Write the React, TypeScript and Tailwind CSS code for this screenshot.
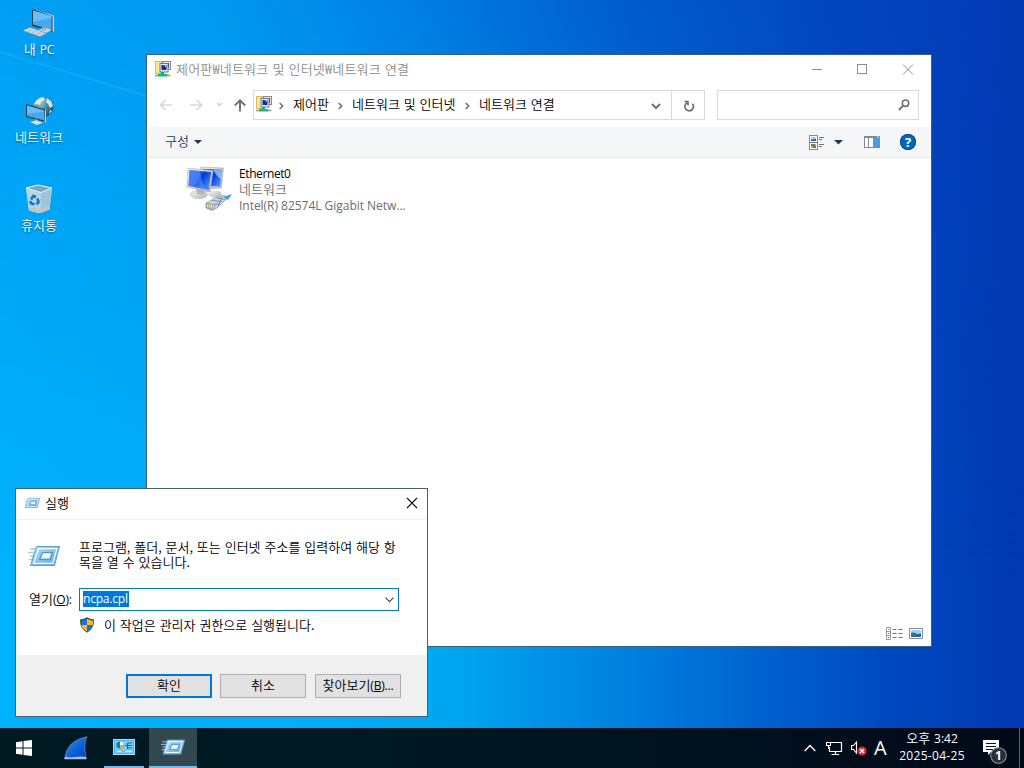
import type { ReactNode } from "react";

function Ko({ children, className = "" }: { children: ReactNode; className?: string }) {
  return (
    <span className={`block whitespace-pre text-[13px] leading-4 [word-spacing:1px] font-[350] font-['Noto_Sans_CJK_KR',sans-serif] ${className}`}>
      {children}
    </span>
  );
}

function En({ children, className = "" }: { children: ReactNode; className?: string }) {
  return <span className={`whitespace-pre text-[12px] font-normal leading-4 font-['Open_Sans','Noto_Sans',sans-serif] ${className}`}>{children}</span>;
}

function PcIcon() {
  return (
    <svg width="32" height="30" viewBox="0 0 32 30">
      <path d="M9 1 L30 7 V24 L9 18Z" fill="#30444f" />
      <path d="M9 1 L30 7 L31 8 V24 L29.500 23.500 V8Z" fill="#c2ccd2" />
      <path d="M10 2.500 L28.500 8 V21.800 L10 16.500Z" fill="#46a8ef" />
      <path d="M10 2.500 L28.500 8 V10 L10 14Z" fill="#7bc6fa" opacity=".7" />
      <path d="M15 21.500 L22 19.500 L29 22 L23 25Z" fill="#cdd3d7" />
      <path d="M19 19 L23 20 V23 L19 22Z" fill="#a5afb5" />
      <path d="M0 22.500 L7 19.500 L23 25.500 L17 28.500Z" fill="#e3e6e8" />
      <path d="M0 22.500 L17 28.500 L23 25.500" fill="none" stroke="#8f999f" strokeWidth=".8" />
      <path d="M3 21.300 L19 27.300 M5 20.500 L21 26.400 M4 24 L10.500 20.800 M8 25.500 L14.500 22.400 M12 27 L18.500 23.900" stroke="#a4acb1" strokeWidth=".6" />
    </svg>
  );
}

function NetIcon() {
  return (
    <svg width="30" height="30" viewBox="0 0 30 30" className="translate-x-[2px]">
      <defs>
        <radialGradient id="globe" cx=".35" cy=".3" r=".8">
          <stop offset="0" stopColor="#9fc6d6" />
          <stop offset=".5" stopColor="#3d8199" />
          <stop offset="1" stopColor="#164a63" />
        </radialGradient>
      </defs>
      <circle cx="17.500" cy="11" r="10" fill="url(#globe)" />
      <path d="M8.500 7 Q12 1 18 1.200 L19 4 L15 6 L14 9 L11 8 L8 9Z M21 2 L25 5 L27 10 L24 12 L22 8 L20 6Z M24 14 L26 15 L23 18Z" fill="#e4f4f2" opacity=".88" />
      <path d="M0 8 L19 13.500 V26 L0 21Z" fill="#30444f" />
      <path d="M19 13.500 L20 13.500 V26.500 L18.500 26Z" fill="#c2ccd2" />
      <path d="M1 9.500 L18 14.500 V24.300 L1 20Z" fill="#46a8ef" />
      <path d="M1 9.500 L18 14.500 V15.500 L1 18Z" fill="#7bc6fa" opacity=".7" />
      <path d="M9 23 L12 24 V27 L9 26Z" fill="#a5afb5" />
      <path d="M4 26 L10 24.500 L17 26.500 L11 29Z" fill="#dde1e4" />
    </svg>
  );
}

function BinIcon() {
  return (
    <svg width="28" height="30" viewBox="0 0 28 30">
      <path d="M1 4 L13 1 L27 4 L24.500 25.500 L13 29 L4 26.500Z" fill="#c5e0ef" />
      <path d="M1 4 L16 8.500 L15.500 29 L4 26.500Z" fill="#b4d4e8" />
      <path d="M16 8.500 L27 4 L24.500 25.500 L15.500 29Z" fill="#9cc4dc" />
      <path d="M1 4 L13 1 L27 4 L16 8.500Z" fill="#74a9c4" stroke="#e9f3f8" strokeWidth="1" />
      <path d="M3.500 22.500 L15.500 25.500 L25 21.500 L24.500 25.500 L15.500 29 L4 26.500Z" fill="#c9c3bd" />
      <g fill="none" stroke="#1675c6" strokeWidth="2.600">
        <path d="M6 15.500 L8.300 12 L11 13" />
        <path d="M12.300 14.500 L13.600 18 L11.500 20.300" />
        <path d="M9.500 20.500 L6 19.300 L5.200 17" />
      </g>
    </svg>
  );
}

function ConnIcon() {
  return (
    <svg width="16" height="16" viewBox="0 0 16 16">
      <rect x=".5" y=".5" width="6" height="12" fill="#fbe88f" stroke="#d2bd66" />
      <rect x="7.500" y=".5" width="8" height="8" fill="#e4e4dc" stroke="#8c8c8c" />
      <rect x="10" y="2" width="4" height="5" fill="#2337bd" />
      <rect x="5" y="2.500" width="8" height="8.500" fill="#eeeee6" stroke="#777" />
      <rect x="6.500" y="4" width="5" height="5" fill="#1426b4" />
      <path d="M8.500 4 h2.500 v2.500z" fill="#8da6ff" />
      <path d="M7.500 11 v3" stroke="#16a974" strokeWidth="3" />
      <rect x="3" y="13" width="9.500" height="2.500" fill="#16b67c" />
      <path d="M0 14.500 H3 M12.500 14.500 H15.500" stroke="#9a9a9a" strokeWidth="1.500" />
    </svg>
  );
}

function EthernetIcon() {
  return (
    <svg width="48" height="48" viewBox="0 0 48 48">
      <defs>
        <linearGradient id="scr" x1="0" y1="0" x2="1" y2=".6">
          <stop offset="0" stopColor="#2a62ea" />
          <stop offset=".45" stopColor="#1b5df0" />
          <stop offset=".6" stopColor="#0238d8" />
          <stop offset="1" stopColor="#3d8bfa" />
        </linearGradient>
        <linearGradient id="met" x1="0" y1="0" x2="1" y2="1">
          <stop offset="0" stopColor="#f6f6f6" />
          <stop offset="1" stopColor="#b0b2b4" />
        </linearGradient>
      </defs>
      <ellipse cx="29" cy="28" rx="7" ry="3.500" fill="url(#met)" />
      <path d="M14.500 1 L37.500 2 L35.500 22 L17 23Z" fill="url(#met)" stroke="#a9abad" strokeWidth=".6" />
      <path d="M16 2.800 L35.800 3.600 L34 20.300 L20 20Z" fill="url(#scr)" />
      <path d="M27 3.300 L35.800 3.600 L34.800 13 Q30 10 27 3.300Z" fill="#a5d0ff" opacity=".75" />
      <ellipse cx="13" cy="28.500" rx="8.500" ry="4.300" fill="url(#met)" stroke="#b6b8ba" strokeWidth=".5" />
      <path d="M10 21 L19 23 L18 29 L11 28Z" fill="#b4b6b8" />
      <path d="M2 2.200 L27 4.500 L24 26 L.8 21Z" fill="url(#met)" stroke="#a9abad" strokeWidth=".6" />
      <path d="M3.500 4 L25.200 6 L22.600 24 L2.500 19.700Z" fill="url(#scr)" />
      <path d="M3.500 4 L14 5 Q15 16 20 23.400 L2.500 19.700Z" fill="#7fb0ff" opacity=".4" />
      <path d="M20 37 L29 32 L38 29.500 L42 31.500 L36 37 L31 42 L26 44.500 L20 42Z" fill="#cbd7e5" stroke="#8394a9" strokeWidth=".7" />
      <path d="M37 31 L46 28 L42 34Z" fill="#3ba7d6" />
      <path d="M26 34.500 L36 35.500 M31 32 L39 33.500 M29 38 L34 38 M36 31 L32 40.500" stroke="#6a7f99" strokeWidth=".8" fill="none" />
      <path d="M20.500 37.500 L29 38.500 L27.500 43.500 L20.500 41.500Z" fill="#f0edda" stroke="#71839a" strokeWidth=".8" />
      <path d="M22.500 38 V42 M24.500 38.500 V42.500 M26.500 38.500 V42.500" stroke="#a39a66" strokeWidth=".8" />
    </svg>
  );
}

function RunIcon({ w, h }: { w: number; h: number }) {
  return (
    <svg width={w} height={h} viewBox="0 0 32 24">
      <defs>
        <linearGradient id="runFace" x1="0" y1="0" x2="1" y2="1">
          <stop offset="0" stopColor="#b9e0f7" />
          <stop offset="1" stopColor="#5aa7df" />
        </linearGradient>
      </defs>
      <path d="M2 5 H8 M0 8.500 H7 M2 12 H7 M1 15.500 H5" stroke="#a9cde6" strokeWidth="1.300" />
      <path d="M8.500 2.500 H31.500 L26.500 21.500 H2.500Z" fill="url(#runFace)" stroke="#5f9fd0" />
      <path d="M10.500 4.700 H28.800 L24.900 19.300 H5.800Z" fill="none" stroke="#f2fafe" strokeWidth="1.300" />
      <path d="M14.500 8.500 H24.300 L22.200 15.300 H11.700Z" fill="#d3eafa" stroke="#5292c6" strokeWidth="1.200" />
      <path d="M15.800 10.200 H22 L20.900 13.600 H14.300Z" fill="#fff" />
    </svg>
  );
}

function Shield() {
  return (
    <svg width="16" height="16" viewBox="0 0 16 16">
      <path d="M8 .3 Q11 2.300 15 2.500 Q15.500 11.500 8 15.800 Q.5 11.500 1 2.500 Q5 2.300 8 .3Z" fill="#45484b" />
      <path d="M8 1.800 V8 H2.300 Q1.900 6 2.200 3.700 Q5.500 3.300 8 1.800Z" fill="#1177d1" />
      <path d="M8 1.800 V8 H13.700 Q14.100 6 13.800 3.700 Q10.500 3.300 8 1.800Z" fill="#fdb92d" />
      <path d="M8 8 H2.300 Q3.500 12 8 14.500Z" fill="#fdb92d" />
      <path d="M8 8 H13.700 Q12.500 12 8 14.500Z" fill="#1177d1" />
    </svg>
  );
}

function Chevron() {
  return (
    <svg width="6" height="8" viewBox="0 0 6 8" className="shrink-0">
      <path d="M.7 1 L3.700 4 L.7 7" fill="none" stroke="#707070" strokeWidth="1.600" />
    </svg>
  );
}

function DesktopItem({ icon, children }: { icon: ReactNode; children: ReactNode }) {
  return (
    <div className="flex h-[88px] w-[78px] flex-col items-center">
      <div className="flex h-8 items-end">{icon}</div>
      <div className="mt-[3px] text-white [text-shadow:0_1px_2px_rgba(0,0,0,0.5)]">{children}</div>
    </div>
  );
}

function NetworkWindow() {
  return (
    <section className="absolute left-[146px] top-[54px] flex h-[593px] w-[786px] flex-col border border-[#35607f] bg-white">
      <header className="flex h-[35px] shrink-0 items-start pl-2 pt-[6px]">
        <ConnIcon />
        <Ko className="ml-[5px] tracking-[0.18px] text-[#8c8c8c]">제어판₩네트워크 및 인터넷₩네트워크 연결</Ko>
        <svg className="ml-auto mr-[17px] mt-[3px]" width="102" height="11" viewBox="0 0 102 11" fill="none" stroke="#8e8e8e">
          <path d="M0 5.500 H10" />
          <rect x="45.500" y=".5" width="9" height="9" />
          <path d="M91 .5 L101 10.500 M101 .5 L91 10.500" />
        </svg>
      </header>
      <div className="flex h-[37px] shrink-0 items-start">
        <svg width="106" height="30" viewBox="0 0 106 30" fill="none" strokeWidth="1.700">
          <path d="M25 15 H13.500 M18.500 10 L13.500 15 L18.500 20" stroke="#d9d9d9" />
          <path d="M43 15 H54.500 M49.500 10 L54.500 15 L49.500 20" stroke="#d9d9d9" />
          <path d="M70 13 L72.500 15.500 L75 13" stroke="#d0d0d0" strokeWidth="1.400" />
          <path d="M93 21.500 V10.500 M87.800 15.500 L93 10.300 L98.200 15.500" stroke="#6f6f6f" strokeWidth="1.900" />
        </svg>
        <div className="flex h-[30px] w-[452px] items-center border border-[#d9d9d9]">
          <div className="flex w-[417px] items-center pb-[2px] pl-[2px]">
            <ConnIcon />
            <span className="ml-[7px] mt-1 w-[14px]"><Chevron /></span>
            <Ko className="w-[45px]">제어판</Ko>
            <span className="mt-1 w-[14px]"><Chevron /></span>
            <Ko className="w-[113px]">네트워크 및 인터넷</Ko>
            <span className="mt-1 w-[14px]"><Chevron /></span>
            <Ko>네트워크 연결</Ko>
            <svg className="ml-auto mr-[10px] mt-1" width="10" height="7" viewBox="0 0 10 7">
              <path d="M1 1 L5 5 L9 1" fill="none" stroke="#707070" strokeWidth="2" />
            </svg>
          </div>
          <div className="flex h-full flex-1 items-center justify-center border-l border-[#d9d9d9] pl-[2px] pt-px">
            <svg width="12" height="12" viewBox="0 0 12 12" fill="none" stroke="#666" strokeWidth="1.600">
              <path d="M4.500 2.500 A4.300 4.300 0 1 0 9.500 3.700" />
              <path d="M1.500 1.500 H5 V5.500" strokeWidth="1.500" />
            </svg>
          </div>
        </div>
        <div className="ml-3 flex h-[30px] w-[202px] items-center justify-end border border-[#d9d9d9] pr-2">
          <svg width="12" height="12" viewBox="0 0 12 12" fill="none" stroke="#707070">
            <circle cx="7.500" cy="4.200" r="3.200" strokeWidth="1.600" />
            <path d="M5.200 6.600 L.8 11" strokeWidth="2" />
          </svg>
        </div>
      </div>
      <div className="flex h-[31px] shrink-0 items-center border-b border-[#e6e7e8] bg-[#f5f6f7] text-[#1e395b]">
        <Ko className="mb-[2px] ml-[18px]">구성</Ko>
        <svg className="ml-[5px]" width="8" height="4" viewBox="0 0 8 4"><path d="M0 0 H8 L4 4Z" fill="#1e395b" /></svg>
        <svg className="ml-auto" width="15" height="15" viewBox="0 0 15 15">
          <rect x=".5" y=".5" width="8" height="14" fill="#fff" stroke="#8b8b8b" />
          <path d="M.5 7.500 H8.500 M10 2.500 h5 M10 4.500 h3 M10 9.500 h5 M10 11.500 h3" stroke="#777" />
          <rect x="2" y="2" width="5" height="4" fill="#a7d3fb" />
          <path d="M2 4.500 L7 4 V6 H2Z" fill="#2e5aa4" />
          <rect x="2" y="9" width="5" height="4" fill="#e0a84c" />
          <path d="M2 9 h2.500 v2 h2.500 v2 h-3 v-2 h-2z" fill="#47944a" />
          <path d="M4 9 h2 v2 h-2z" fill="#c8574f" />
        </svg>
        <svg className="ml-[10px]" width="9" height="5" viewBox="0 0 9 5"><path d="M0 0 H9 L4.500 4.500Z" fill="#1e395b" /></svg>
        <svg className="ml-[21px]" width="16" height="12" viewBox="0 0 16 12">
          <rect x=".5" y=".5" width="15" height="11" fill="#fff" stroke="#838990" />
          <path d="M0 1 H16" stroke="#838990" strokeWidth="2" />
          <path d="M4.500 2 V12" stroke="#838990" />
          <rect x="9" y="1.500" width="6.500" height="10" fill="#4a9fe3" />
          <path d="M13 1 h2" stroke="#fff" strokeWidth=".7" />
        </svg>
        <span className="ml-5 mr-[15px] flex h-4 w-4 items-center justify-center rounded-full bg-[#0465c0] text-[13px] font-bold leading-4 text-white ring-1 ring-inset ring-[#124a86] font-['Open_Sans',sans-serif]">?</span>
      </div>
      <div className="flex flex-1 items-start pl-[39px] pt-2">
        <EthernetIcon />
        <div className="ml-[5px] flex flex-col">
          <En className="tracking-[-0.4px]">Ethernet0</En>
          <Ko className="-mt-px mb-px text-[#6d6d6d]">네트워크</Ko>
          <En className="tracking-[-0.03px] text-[#6d6d6d]">Intel(R) 82574L Gigabit Netw...</En>
        </div>
      </div>
      <footer className="flex h-[26px] shrink-0 items-center justify-end gap-[6px] pr-2">
        <svg width="17" height="13" viewBox="0 0 17 13">
          <path d="M.5 .5 H4.500 V12.500 H.5Z M.5 4.500 H4.500 M.5 8.500 H4.500" fill="#fff" stroke="#999" />
          <path d="M6.500 2.500 h4 M12.500 2.500 h4 M6.500 6.500 h4 M12.500 6.500 h4 M6.500 10.500 h4 M12.500 10.500 h4" stroke="#777" />
          <path d="M2 2.500 h1 M2 6.500 h1" stroke="#3176b8" />
          <path d="M2 10.500 h1" stroke="#c13636" />
        </svg>
        <svg width="14" height="11" viewBox="0 0 14 11">
          <rect x=".5" y=".5" width="13" height="10" fill="#fff" stroke="#8f8f8f" />
          <rect x="2" y="2" width="10" height="7" fill="#a3d1fb" />
          <path d="M2 5 Q5 3.500 8 6 L12 5.500 V9 H2Z" fill="#2b68a9" />
          <path d="M2 5 Q4 4 6 6.500 L2 7.500Z" fill="#387c5c" />
        </svg>
      </footer>
    </section>
  );
}

function RunDialog() {
  return (
    <section className="absolute left-[15px] top-[488px] flex h-[229px] w-[413px] flex-col border border-[#47616f] bg-white text-black">
      <header className="flex h-[31px] shrink-0 items-center border-b border-[#efefef] pb-[2px] pl-2">
        <RunIcon w={16} h={12} />
        <Ko className="ml-[5px]">실행</Ko>
        <svg className="ml-auto mr-[9px]" width="12" height="12" viewBox="0 0 12 12"><path d="M1 1 L11 11 M11 1 L1 11" stroke="#111" strokeWidth="1.100" /></svg>
      </header>
      <div className="flex flex-1 flex-col">
        <div className="flex h-[68px] items-start pt-[19px]">
          <div className="ml-3 mt-[5px] w-[51px]"><RunIcon w={32} h={24} /></div>
          <Ko className="w-[325px] leading-[15px]">{"프로그램, 폴더, 문서, 또는 인터넷 주소를 입력하여 해당 항\n목을 열 수 있습니다."}</Ko>
        </div>
        <div className="flex h-[23px] items-center">
          <Ko className="w-[63px] pl-[13px]">열기<En className="tracking-[-0.2px]">(<u>O</u>):</En></Ko>
          <div className="flex h-[23px] w-[320px] items-start border border-[#0078d7] pl-[3px] pt-[2px]">
            <span className="flex h-4 w-[46px] bg-[#0078d7] text-white"><En className="tracking-[-0.2px]">ncpa.cpl</En></span>
            <svg className="ml-auto mr-1 mt-[6px]" width="9" height="6" viewBox="0 0 9 6"><path d="M.5 .7 L4.500 4.700 L8.500 .7" fill="none" stroke="#444" strokeWidth="1.100" /></svg>
          </div>
        </div>
        <div className="mt-[6px] flex items-center pl-[63px]">
          <Shield />
          <Ko className="ml-[9px]">이 작업은 관리자 권한으로 실행됩니다.</Ko>
        </div>
      </div>
      <footer className="flex h-[61px] shrink-0 items-start bg-[#f0f0f0] pl-[110px] pt-[19px]">
        <button className="flex h-6 w-[86px] items-center justify-center border-2 border-[#0078d7] bg-[#e1e1e1] pb-[2px]"><Ko>확인</Ko></button>
        <button className="ml-2 flex h-6 w-[86px] items-center justify-center border border-[#adadad] bg-[#e1e1e1] pb-[2px]"><Ko>취소</Ko></button>
        <button className="ml-[9px] flex h-6 w-[86px] items-center justify-center border border-[#adadad] bg-[#e1e1e1] pb-[2px]">
          <Ko>찾아보기<En className="tracking-[-0.2px]">(<u>B</u>)...</En></Ko>
        </button>
      </footer>
    </section>
  );
}

function Taskbar() {
  return (
    <nav className="relative flex h-10 items-stretch bg-[linear-gradient(90deg,#001a24_0%,#001923_35%,#01111f_70%,#010917_100%)] text-white">
      <div className="flex w-12 items-center justify-center">
        <svg width="16" height="16" viewBox="0 0 16 16" fill="#fff">
          <path d="M0 2.300 L6.500 1.300 V7.500 H0Z M7.500 1.100 L16 0 V7.500 H7.500Z M0 8.500 H6.500 V14.700 L0 13.700Z M7.500 8.500 H16 V16 L7.500 14.900Z" />
        </svg>
      </div>
      <div className="flex w-[55px] items-center justify-center">
        <svg width="24" height="24" viewBox="0 0 24 24">
          <defs>
            <linearGradient id="fin" x1="0" y1="0" x2="1" y2="1">
              <stop offset="0" stopColor="#3a93f5" />
              <stop offset=".5" stopColor="#0e66dc" />
              <stop offset="1" stopColor="#0a3aa8" />
            </linearGradient>
          </defs>
          <path d="M.5 23 Q3 4 23 .7 Q19 8 22.300 23Z" fill="url(#fin)" stroke="#6c92c4" strokeWidth=".7" />
          <path d="M.5 23 L1.200 20.500 Q6 22 11 21 Q17 20 22 21 L22.300 23Z" fill="#a9bfe6" />
        </svg>
      </div>
      <div className="ml-px flex h-10 w-10 items-center justify-center border-b-2 border-[#76b9ed]">
        <svg width="22" height="16" viewBox="0 0 22 16">
          <rect x=".5" y=".5" width="21" height="15" fill="#49b7ee" stroke="#a5def8" />
          <rect x="2" y="2" width="18" height="12" fill="#74cdf6" />
          <circle cx="7" cy="6" r="3.600" fill="#1b77bd" />
          <path d="M7 6 V2.400 A3.600 3.600 0 0 1 10.600 6Z" fill="#f4fbff" />
          <path d="M7 6 H10.600 A3.600 3.600 0 0 1 7 9.600Z" fill="#f4a73b" />
          <path d="M12 6.500 h2 M14.500 4 v6 M15 4 h4 M15 6.500 h4 M15 9 h4" stroke="#1468a4" strokeWidth="1.200" fill="none" />
          <path d="M4 12.500 h7 M13 12.500 h6" stroke="#fff" />
          <path d="M8 12.500 h4" stroke="#f0a030" strokeWidth="1.500" />
        </svg>
      </div>
      <div className="ml-[5px] flex h-10 w-12 items-center justify-center border-b-2 border-[#76b9ed] bg-[#33474f]">
        <RunIcon w={24} h={18} />
      </div>
      <div className="ml-auto flex items-center">
        <svg width="12" height="8" viewBox="0 0 12 8"><path d="M.7 7 L6 1.500 L11.300 7" fill="none" stroke="#fff" strokeWidth="1.300" /></svg>
        <svg className="ml-[10px]" width="17" height="14" viewBox="0 0 17 14" fill="none" stroke="#fff">
          <path d="M5 1.500 H15.500 V10.500 H3.500 V6 M9.500 10.500 V13 M5.500 13.500 H13" strokeWidth="1.200" />
          <rect x=".5" y="1.500" width="4" height="3" />
          <path d="M2.500 4 V8" />
        </svg>
        <svg className="ml-2" width="17" height="15" viewBox="0 0 17 15">
          <path d="M.6 4.500 H2.500 L5.500 1 V12 L2.500 8.500 H.6Z" fill="none" stroke="#fff" strokeWidth="1.100" />
          <circle cx="11" cy="10" r="4.600" fill="#d92632" />
          <path d="M9 8 L13 12 M13 8 L9 12" stroke="#fff" strokeWidth="1.500" />
        </svg>
        <span className="ml-[6px] w-[13px] text-[20px] leading-5 font-['Open_Sans',sans-serif]">A</span>
        <div className="ml-[10px] flex w-[70px] flex-col items-center">
          <Ko className="-mt-[2px] leading-[18px]">오후 <En>3:42</En></Ko>
          <En className="leading-[18px] tracking-[0.3px]">2025-04-25</En>
        </div>
        <div className="relative ml-[16px] mt-2 h-[26px] w-[26px]">
          <svg width="26" height="26" viewBox="0 0 26 26">
            <path d="M0 1 H16 V13 H8 L5 16 V13 H0Z" fill="#fff" />
            <path d="M3 4.500 h10 M3 7.500 h10 M3 10.500 h7" stroke="#07131f" />
            <circle cx="15.500" cy="16.500" r="7.800" fill="#2a2e36" stroke="#8b9097" strokeWidth="1.100" />
          </svg>
          <span className="absolute left-[12px] top-[9px] text-[12px] font-bold leading-4 font-['Open_Sans',sans-serif]">1</span>
        </div>
        <span className="ml-[10px] h-10 w-[5px] border-l border-[#5d6672]" />
      </div>
    </nav>
  );
}

export default function App() {
  return (
    <main className="relative flex h-[768px] w-[1024px] flex-col overflow-hidden bg-[linear-gradient(90deg,#00b2fb_0%,#00aef8_30%,#00a6f0_44%,#0090e6_54%,#007adb_64%,#0063cf_74%,#004ac0_86%,#0238b0_100%)]">
      <div className="absolute inset-0 bg-[linear-gradient(90deg,#009ff5_0%,#0099f0_20%,#0088e8_34%,#0077dc_45%,#0066d1_55%,#0058c8_65%,#0247bf_80%,#0339b3_100%)] [mask-image:linear-gradient(180deg,#000_0%,transparent_75%)]" />
      <svg className="absolute left-0 top-0" width="147" height="98" viewBox="0 0 147 98">
        <path d="M0 52 L147 96" stroke="#4fc0ff" strokeWidth="2" opacity=".22" />
        <path d="M0 53 L147 97 V98 H0Z" fill="#00b4ff" opacity=".06" />
      </svg>
      <div className="relative flex flex-1 flex-col pt-[6px]">
        <DesktopItem icon={<PcIcon />}><Ko>내 <En className="tracking-[-0.1px]">PC</En></Ko></DesktopItem>
        <DesktopItem icon={<NetIcon />}><Ko>네트워크</Ko></DesktopItem>
        <DesktopItem icon={<BinIcon />}><Ko>휴지통</Ko></DesktopItem>
      </div>
      <NetworkWindow />
      <RunDialog />
      <Taskbar />
    </main>
  );
}
